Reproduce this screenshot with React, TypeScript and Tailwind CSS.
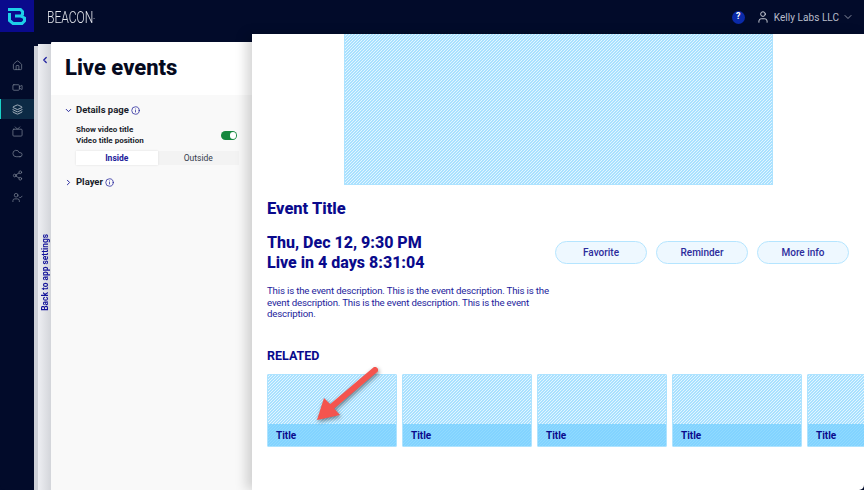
import { ChevronDown, ChevronLeft, ChevronRight, Cloud, Home, Info, Layers, Share2, Tv, User, UserCheck, Video } from "lucide-react";

const hatch =
  "bg-[linear-gradient(135deg,#a9e1ff_25%,#e3f5ff_25%,#e3f5ff_50%,#a9e1ff_50%,#a9e1ff_75%,#e3f5ff_75%)] bg-[length:3px_3px]";
const bandHatch =
  "bg-[linear-gradient(135deg,#82d3ff_25%,#90daff_25%,#90daff_50%,#82d3ff_50%,#82d3ff_75%,#90daff_75%)] bg-[length:3px_3px]";

const navIcons = [Home, Video, Layers, Tv, Cloud, Share2, UserCheck];

function Logo() {
  return (
    <div className="w-[34px] h-[32px] bg-[#0a0a8c] flex items-center justify-center">
      <svg width="20" height="19" viewBox="0 0 20 19" fill="none" stroke="#1ed0e8" strokeWidth="3">
        <path d="M1 2.5H13.5L15.5 4.5V7.5L14 9H8" />
        <path d="M14 9L17.5 11V14L15 16.5H6L2.5 13.5V6" />
      </svg>
    </div>
  );
}

function Header() {
  return (
    <header className="h-[34px] shrink-0 flex items-start bg-[#020b2a]">
      <Logo />
      <span className="ml-[13px] mt-[8px] text-[17px] leading-[18px] text-[#e4e6ec] font-light scale-x-[0.71] origin-left">
        BEACON<sup className="text-[4px]">™</sup>
      </span>
      <div className="ml-auto h-full flex items-center pr-[10px]">
        <div className="w-[13px] h-[13px] rounded-full bg-[#0b2aa8] text-white text-[9px] font-bold flex items-center justify-center">
          ?
        </div>
        <User className="ml-[11px] w-[14px] h-[14px] text-[#d5d8e0]" strokeWidth={1.6} />
        <span className="ml-[4px] text-[10px] tracking-[0.05px] text-[#b9bdca]">Kelly Labs LLC</span>
        <ChevronDown className="ml-[3px] w-[12px] h-[12px] text-[#b9bdca]" strokeWidth={1.5} />
      </div>
    </header>
  );
}

function Sidebar() {
  return (
    <nav className="w-[34px] shrink-0 pt-[20px] flex flex-col rounded-bl-[5px] bg-[#020b2a]">
      {navIcons.map((Icon, i) => (
        <div
          key={i}
          className={
            i === 2
              ? "h-[20px] my-[1px] flex items-center justify-center border-l-[1px] border-[#19d3c8] bg-[#0c2a45] text-[#d5dbe3]"
              : "h-[20px] my-[1px] flex items-center justify-center text-[#7c8494]"
          }
        >
          <Icon className="w-[11px] h-[11px]" strokeWidth={1.6} />
        </div>
      ))}
    </nav>
  );
}

function BackStrip() {
  return (
    <div className="w-[17px] shrink-0 flex pt-[10px]">
      <div className="w-[4px] mt-[2px] bg-[#cfd1d8]" />
      <div className="w-[13px] bg-gradient-to-r from-[#eeeff3] to-[#d3d5da] flex flex-col items-center">
        <ChevronLeft className="mt-[11px] w-[10px] h-[10px] text-[#2020a0]" strokeWidth={3} />
        <div className="mt-[169px] ml-[1px] [writing-mode:vertical-rl] rotate-180 text-[8.4px] leading-[13px] font-bold text-[#12129a]">
          Back to app settings
        </div>
      </div>
    </div>
  );
}

function Settings() {
  return (
    <aside className="w-[201px] shrink-0 pt-[8px] flex flex-col">
      <div className="h-[53px] bg-white pl-[14px] pt-[11px] rounded-tl-[1px]">
        <h1 className="text-[22px] leading-[30px] font-extrabold text-[#050a1e]">Live events</h1>
      </div>
      <div className="flex-1 pl-[13px] pr-[13px] pt-[8px] bg-[#f9f9f9]">
        <div className="flex items-center h-[14px]">
          <ChevronDown className="w-[9px] h-[9px] text-[#20209a]" strokeWidth={2.5} />
          <span className="ml-[3px] text-[9.5px] font-bold text-[#1a1d2b]">Details page</span>
          <Info className="ml-[2px] w-[9px] h-[9px] text-[#20209a]" />
        </div>
        <div className="ml-[12px] mt-[8px] relative">
          <div className="text-[8px] leading-[10.5px] font-bold text-[#1a1d2b]">
            <div>Show video title</div>
            <div>Video title position</div>
          </div>
          <div className="absolute right-[2px] top-[6px] w-[16px] h-[9px] rounded-full bg-[#15883e] flex justify-end items-center pr-[1px]">
            <div className="w-[6.5px] h-[6.5px] rounded-full bg-white" />
          </div>
          <div className="mt-[5px] h-[14px] flex bg-[#f3f3f3] text-[8.5px] leading-[14px] text-center">
            <div className="flex-1 bg-white font-bold text-[#20209a] shadow-[0_0_2px_#ddd]">Inside</div>
            <div className="flex-1 text-[#333b4d]">Outside</div>
          </div>
        </div>
        <div className="flex items-center h-[14px] mt-[10px]">
          <ChevronRight className="w-[9px] h-[9px] text-[#20209a]" strokeWidth={2.5} />
          <span className="ml-[3px] text-[9.5px] font-bold text-[#1a1d2b]">Player</span>
          <Info className="ml-[2px] w-[9px] h-[9px] text-[#20209a]" />
        </div>
      </div>
    </aside>
  );
}

function Preview() {
  return (
    <main className="relative flex-1 bg-white shadow-[-6px_0_12px_rgba(0,0,0,0.16)] rounded-br-[5px] overflow-hidden text-[#0a0a8c]">
      <div className={`mx-auto w-[429px] h-[151px] border border-[#aee3ff] border-t-0 ${hatch}`} />
      <div className="pl-[15px] pr-[15px]">
        <h2 className="mt-[14px] text-[16.5px] leading-[20px] font-extrabold">Event Title</h2>
        <div className="mt-[14px] mb-[1px] flex items-center justify-between">
          <div className="text-[16px] leading-[20px] font-extrabold">
            <div>Thu, Dec 12, 9:30 PM</div>
            <div>Live in 4 days 8:31:04</div>
          </div>
          <div className="flex gap-[9px] mb-[1px]">
            {["Favorite", "Reminder", "More info"].map((t) => (
              <button
                key={t}
                className="w-[92px] h-[23px] rounded-full border border-[#b5e5ff] bg-[#eef8ff] text-[10px] font-medium text-[#2c2c9c]"
              >
                {t}
              </button>
            ))}
          </div>
        </div>
        <p className="mt-[12px] w-[285px] text-[9.7px] tracking-[-0.18px] leading-[11.7px] text-[#1c1c9c]">
          This is the event description. This is the event description. This is the event description. This is the event description. This is the event description.
        </p>
        <h3 className="mt-[28px] text-[12.5px] leading-[16px] font-bold">RELATED</h3>
        <div className="mt-[10px] flex gap-[5px] w-[700px]">
          {[0, 1, 2, 3, 4].map((i) => (
            <div key={i} className={`w-[130px] shrink-0 h-[73px] flex flex-col justify-end border border-[#aee3ff] rounded-[1px] ${hatch}`}>
              <div className={`h-[22px] pl-[8px] text-[10px] leading-[23px] font-bold ${bandHatch}`}>Title</div>
            </div>
          ))}
        </div>
      </div>
      <svg className="absolute left-[63px] top-[332px] drop-shadow-[1px_2px_2px_rgba(0,0,0,0.45)]" width="68" height="60" viewBox="0 0 68 60" fill="none">
        <path d="M60 4L14 43" stroke="#f4544e" strokeWidth="6" strokeLinecap="round" />
        <path d="M2 54L9 32L15 38L25 49Z" fill="#f4544e" />
      </svg>
    </main>
  );
}

export default function App() {
  return (
    <div className="w-[864px] h-[490px] flex flex-col bg-[#020b2a] font-['Roboto',sans-serif] overflow-hidden">
      <Header />
      <div className="flex-1 flex min-h-0">
        <Sidebar />
        <BackStrip />
        <Settings />
        <Preview />
      </div>
    </div>
  );
}
